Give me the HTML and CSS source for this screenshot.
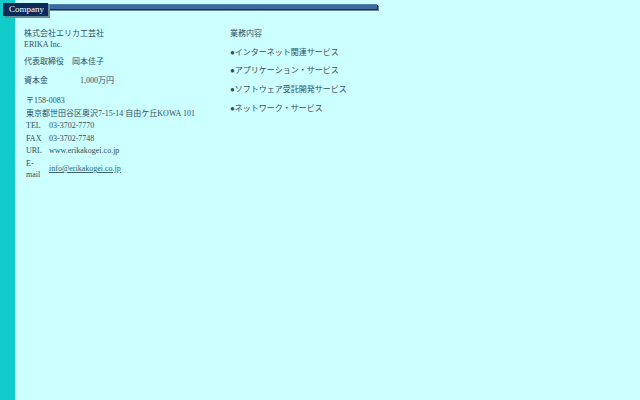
FILE: index.html
```html
<!DOCTYPE html>
<html>
<head>
<meta charset="utf-8">
<link rel="stylesheet" href="styles.css">
</head>
<body>
<div class="header">
  <div class="label">Company</div>
  <div class="bar"></div>
</div>
<div class="content">
  <div class="col left">
    <div class="block">株式会社エリカ工芸社<br>ERIKA Inc.</div>
    <div class="block rep"><span class="key1">代表取締役</span>岡本佳子</div>
    <div class="block"><span class="key2">資本金</span>1,000万円</div>
    <div class="info">
      <div class="full">〒158-0083</div>
      <div class="full">東京都世田谷区奥沢7-15-14 自由ケ丘KOWA 101</div>
      <div class="k">TEL</div><div>03-3702-7770</div>
      <div class="k">FAX</div><div>03-3702-7748</div>
      <div class="k">URL</div><div>www.erikakogei.co.jp</div>
      <div class="k">E-mail</div><div class="mid"><a href="#">info@erikakogei.co.jp</a></div>
    </div>
  </div>
  <div class="col right">
    <div class="item">業務内容</div>
    <div class="item">●インターネット関連サービス</div>
    <div class="item">●アプリケーション・サービス</div>
    <div class="item">●ソフトウェア受託開発サービス</div>
    <div class="item">●ネットワーク・サービス</div>
  </div>
</div>
</body>
</html>
```
FILE: styles.css
```css
html, body {
  margin: 0;
  height: 100%;
}
body {
  background: linear-gradient(to right, #12cccc 0, #12cccc 15px, #ccffff 15px);
  font-family: "Liberation Serif", "Noto Sans CJK JP", serif;
  font-size: 8px;
  line-height: 11px;
  color: #334d5c;
}
.header {
  display: flex;
  align-items: flex-start;
  padding: 3px 0 0 3px;
}
.label {
  background: #0b2a5a;
  color: #ffffff;
  font-size: 9px;
  line-height: 13px;
  height: 13px;
  padding: 0 4px 0 6px;
  box-shadow: 2px 2px 0 #6a8a96;
  position: relative;
  z-index: 1;
}
.bar {
  width: 329px;
  height: 4px;
  margin-top: 1px;
  background: #3a6a9e;
  border-top: 1px solid #5580b0;
  box-shadow: 1px 1px 0 #1e2e44, 2px 2px 0 #6a8a96;
}
.content {
  display: flex;
  padding: 12px 0 0 24px;
}
.col.left {
  width: 206px;
}
.block {
  margin-bottom: 7px;
}
.block:first-child {
  margin-bottom: 6px;
}
.block.rep {
  margin-bottom: 8px;
}
.key1 {
  display: inline-block;
  width: 48px;
}
.key2 {
  display: inline-block;
  width: 56px;
}
.info {
  display: grid;
  grid-template-columns: 20px auto;
  column-gap: 3px;
  row-gap: 1.5px;
  padding: 2px 0 0 2px;
}
.info .mid {
  align-self: center;
}
.info .full {
  grid-column: 1 / 3;
}
.info a {
  color: #336670;
  text-decoration: underline;
}
.item {
  margin-bottom: 7.7px;
}
```
